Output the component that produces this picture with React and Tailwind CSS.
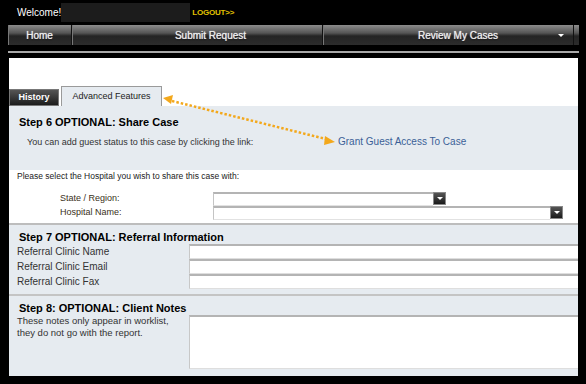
const navCell = "flex items-center justify-center text-[10px] text-[#ececec] [text-shadow:0_0_1px_#fff,0_1px_1px_#000] border-r border-[#111] shadow-[inset_1px_0_0_#777]";

const Select = ({ width }) => (
  <div className="flex h-[14px]" style={{ width }}>
    <div className="flex-1 bg-white border-t-2 border-l border-b border-t-[#b4b4b4] border-l-[#c4c4c4] border-b-[#e2e2e2]" />
    <div className="w-[13px] h-[13px] bg-[linear-gradient(#555,#1a1a1a)] border border-[#888] flex items-center justify-center">
      <div className="w-0 h-0 border-l-[3px] border-r-[3px] border-t-[3px] border-l-transparent border-r-transparent border-t-white" />
    </div>
  </div>
);

const Field = ({ className }) => (
  <div className={`bg-white border-t-2 border-l border-b border-t-[#b4b4b4] border-l-[#c8c8c8] border-b-[#dedede] ${className}`} />
);

export default function App() {
  return (
    <div className="relative w-[586px] h-[384px] bg-black overflow-hidden font-['Liberation_Sans',Arial,sans-serif]">
      {/* top bar */}
      <div className="h-[25px] flex items-center pl-[17px]">
        <span className="text-[10px] text-white">Welcome!</span>
        <div className="w-[129px] h-[19px] bg-[#1c1c1c]" />
        <span className="ml-[2px] text-[8px] font-bold text-[#e0c000] tracking-tight">LOGOUT&gt;&gt;</span>
      </div>

      {/* nav */}
      <div className="ml-[8px] w-[571px] h-[20px] flex bg-[linear-gradient(#8c8c8c_0%,#555_40%,#242424_55%,#2c2c2c_100%)]">
        <div className={`${navCell} w-[64px]`}>Home</div>
        <div className={`${navCell} w-[251px] pl-[27px]`}>Submit Request</div>
        <div className={`${navCell} w-[251px] pl-[20px] relative`}>
          Review My Cases
          <div className="absolute right-[9px] top-[9px] w-0 h-0 border-l-[3px] border-r-[3px] border-t-[3px] border-l-transparent border-r-transparent border-t-white" />
        </div>
        <div className="flex-1" />
      </div>

      <div className="ml-[8px] mt-[6px] w-[571px] h-[2px] bg-[#a8a8a8]" />

      {/* content panel */}
      <div className="ml-[9px] mt-[5px] w-[569px] h-[318px] bg-white flex flex-col">
        {/* tabs */}
        <div className="pt-[28px] flex items-end h-[48px]">
          <div className="w-[50px] h-[17px] bg-[linear-gradient(#555,#1c1c1c)] border border-[#777] flex items-center justify-center text-[9px] font-bold text-white">History</div>
          <div className="ml-[2px] w-[101px] h-[20px] bg-[#e6ebf0] border border-b-0 border-[#9a9a9a] flex items-center justify-center text-[9px] text-[#222]">Advanced Features</div>
        </div>

        {/* step 6 */}
        <div className="h-[64px] bg-[#e6ebf0] pt-[9px] pl-[10px]">
          <div className="text-[11px] font-bold text-black leading-[14px]">Step 6 OPTIONAL: Share Case</div>
          <div className="flex items-center mt-[7px] text-[9px] leading-[12px]">
            <span className="ml-[8px] w-[311px] text-[#333]">You can add guest status to this case by clicking the link:</span>
            <span className="text-[10px] text-[#3b5f97]">Grant Guest Access To Case</span>
          </div>
        </div>

        {/* hospital */}
        <div className="h-[53px] pt-[1px] pl-[8px]">
          <div className="text-[8.5px] text-[#222] leading-[11px]">Please select the Hospital you wish to share this case with:</div>
          <div className="flex items-center mt-[10px] h-[14px]">
            <span className="ml-[43px] w-[153px] text-[9px] text-[#3a3020]">State / Region:</span>
            <Select width={233} />
          </div>
          <div className="flex items-center h-[14px]">
            <span className="ml-[43px] w-[153px] text-[9px] text-[#3a3020]">Hospital Name:</span>
            <Select width={350} />
          </div>
        </div>

        <div className="h-[2px] bg-[#bdbdbd]" />

        {/* step 7 + 8 */}
        <div className="flex-1 bg-[#e6ebf0]">
          <div className="pl-[10px] pt-[5px] text-[11px] font-bold text-black leading-[14px]">Step 7 OPTIONAL: Referral Information</div>
          <div className="flex flex-col">
            {["Referral Clinic Name", "Referral Clinic Email", "Referral Clinic Fax"].map((label) => (
              <div key={label} className="flex items-center h-[15px]">
                <span className="pl-[8px] w-[180px] text-[10px] text-[#333]">{label}</span>
                <Field className="flex-1 h-[15px]" />
              </div>
            ))}
          </div>
          <div className="mt-[5px] h-[2px] bg-[#c4c4c4]" />
          <div className="pl-[10px] pt-[5px] text-[11px] font-bold text-black leading-[14px]">Step 8: OPTIONAL: Client Notes</div>
          <div className="flex">
            <div className="pl-[8px] w-[180px] text-[9.5px] leading-[12px] text-[#333]">
              These notes only appear in worklist,<br />they do not go with the report.
            </div>
            <Field className="flex-1 h-[54px]" />
          </div>
        </div>
      </div>

      {/* annotation arrow */}
      <svg className="absolute left-0 top-0 pointer-events-none" width="586" height="384">
        <line x1="172" y1="101" x2="326" y2="139" stroke="#f3a81c" strokeWidth="2.5" strokeDasharray="2.5 2" />
        <polygon points="163,98 173,95 171,104" fill="#f3a81c" />
        <polygon points="335,142 325,136 324,145" fill="#f3a81c" />
      </svg>
    </div>
  );
}
